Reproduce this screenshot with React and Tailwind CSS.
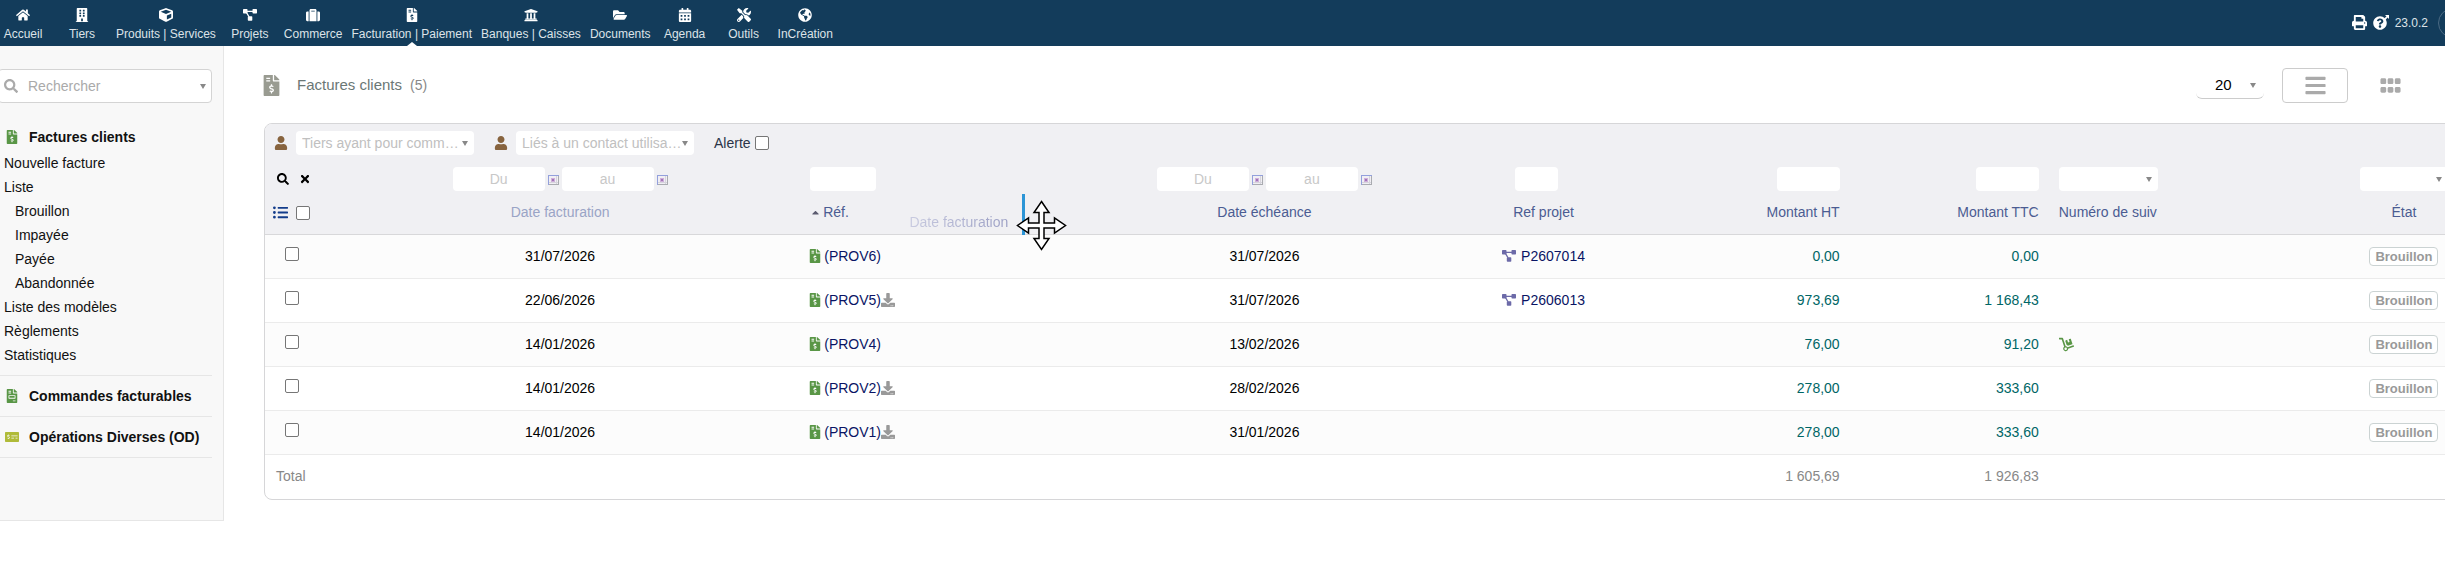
import React from 'react';
import {
  FaHome, FaBuilding, FaCube, FaSuitcase, FaFileInvoiceDollar, FaUniversity,
  FaFolderOpen, FaCalendarAlt, FaTools, FaGlobeAmericas, FaPrint, FaQuestionCircle, FaSearch,
  FaFileInvoice, FaMoneyCheckAlt, FaUser, FaTimes, FaListUl, FaBars, FaGripHorizontal,
  FaDownload, FaDolly, FaCaretUp,
} from 'react-icons/fa';

const ProjectIcon = ({ size = 14, className }) => (
  <svg width={size} height={size} viewBox="0 0 14 14" fill="currentColor" className={className}>
    <rect x="0" y="1" width="4.500" height="4.500" rx="0.700" />
    <rect x="9.500" y="1" width="4.500" height="4.500" rx="0.700" />
    <rect x="4.800" y="8.200" width="4.500" height="4.500" rx="0.700" />
    <path d="M4 2.700H10V3.900H4ZM3 5L4.200 4.400L6.600 8.400L5.400 9Z" />
  </svg>
);

const topMenu = [
  { label: 'Accueil', icon: FaHome },
  { label: 'Tiers', icon: FaBuilding },
  { label: 'Produits | Services', icon: FaCube },
  { label: 'Projets', icon: ProjectIcon },
  { label: 'Commerce', icon: FaSuitcase },
  { label: 'Facturation | Paiement', icon: FaFileInvoiceDollar, active: true },
  { label: 'Banques | Caisses', icon: FaUniversity },
  { label: 'Documents', icon: FaFolderOpen },
  { label: 'Agenda', icon: FaCalendarAlt },
  { label: 'Outils', icon: FaTools },
  { label: 'InCréation', icon: FaGlobeAmericas },
];

const sideLinks = [
  { label: 'Nouvelle facture' },
  { label: 'Liste' },
  { label: 'Brouillon', sub: true },
  { label: 'Impayée', sub: true },
  { label: 'Payée', sub: true },
  { label: 'Abandonnée', sub: true },
  { label: 'Liste des modèles' },
  { label: 'Règlements' },
  { label: 'Statistiques' },
];

const invoices = [
  { ref: '(PROV6)', date: '31/07/2026', due: '31/07/2026', project: 'P2607014', ht: '0,00', ttc: '0,00' },
  { ref: '(PROV5)', date: '22/06/2026', due: '31/07/2026', project: 'P2606013', ht: '973,69', ttc: '1 168,43', file: true },
  { ref: '(PROV4)', date: '14/01/2026', due: '13/02/2026', ht: '76,00', ttc: '91,20', shipment: true },
  { ref: '(PROV2)', date: '14/01/2026', due: '28/02/2026', ht: '278,00', ttc: '333,60', file: true },
  { ref: '(PROV1)', date: '14/01/2026', due: '31/01/2026', ht: '278,00', ttc: '333,60', file: true },
];

const Checkbox = ({ label }) => (
  <input
    type="checkbox"
    aria-label={label}
    className="block size-[14px] shrink-0 appearance-none rounded-xs border border-[#767676] bg-white checked:bg-[#133c5b]"
  />
);

const Arrow = () => (
  <svg width="6" height="5" viewBox="0 0 6 5" fill="#888">
    <path d="M0 0H6L3 5Z" />
  </svg>
);

const Select = ({ label, text = '', className }) => (
  <div className={`relative ${className}`}>
    <select
      aria-label={label}
      className="block h-6 w-full appearance-none truncate rounded-sm bg-white pl-[6px] pr-3 text-[14px] text-[#c0c0c0]"
    >
      <option>{text}</option>
    </select>
    <span className="pointer-events-none absolute inset-y-0 right-[6px] flex items-center">
      <Arrow />
    </span>
  </div>
);

const TextFilter = ({ label, className }) => (
  <input type="text" aria-label={label} className={`h-6 rounded-sm bg-white px-1 ${className}`} />
);

const CalendarIcon = () => (
  <svg width="11" height="10" viewBox="0 0 11 10" shapeRendering="crispEdges">
    <rect width="11" height="10" fill="#a9abb0" />
    <path d="M0 0h11v1H1v9H0z" fill="#93a0dc" />
    <rect x="1" y="1" width="9" height="8" fill="#f1eff4" />
    <path d="M8 1h1v8H8zM1 7h9v1H1z" fill="#d6d5dc" />
    <rect x="3" y="3" width="4" height="4" fill="#cfb0da" />
    <rect x="4" y="4" width="2" height="2" fill="#a274b8" />
  </svg>
);

const DateRange = ({ name }) => (
  <div className="flex items-center justify-center gap-[3px]">
    {['Du', 'au'].map((part) => (
      <React.Fragment key={part}>
        <input
          type="text"
          placeholder={part}
          aria-label={`${name} ${part}`}
          className="h-6 w-[92px] rounded-sm bg-white text-center text-[14px] placeholder:text-[#c8c8c8]"
        />
        <button type="button" aria-label={`${name} ${part} calendrier`} className="pt-[2px]">
          <CalendarIcon />
        </button>
      </React.Fragment>
    ))}
  </div>
);

const MoveCursor = () => (
  <svg width="51" height="51" viewBox="0 0 51 51">
    <path
      d="M25.500 1.500L33 12.500H28V23H38.500V18L49.500 25.500L38.500 33V28H28V38.500H33L25.500 49.500L18 38.500H23V28H12.500V33L1.500 25.500L12.500 18V23H23V12.500H18Z"
      fill="#fff"
      stroke="#000"
      strokeWidth="1.500"
    />
  </svg>
);

const TopBar = () => (
  <header className="flex h-[46px] justify-between bg-[#133c5b] text-[12px] text-[#dde3e8]">
    <nav className="-ml-[6px] flex gap-px">
      {topMenu.map(({ label, icon: Icon, active }) => (
        <a
          key={label}
          href="#"
          className="relative flex min-w-[58px] flex-col items-center px-1 pt-2 whitespace-nowrap"
        >
          <Icon size={14} className="text-white" />
          <span className="mt-1 leading-4">{label}</span>
          {active && (
            <span className="absolute bottom-0 border-x-[5px] border-b-4 border-x-transparent border-b-white" />
          )}
        </a>
      ))}
    </nav>
    <div className="-mr-[23px] flex items-center gap-[6px] pb-px">
      <button type="button" aria-label="Imprimer" className="text-white"><FaPrint size={15} /></button>
      <button type="button" aria-label="Aide" className="relative pr-[2px] text-white">
        <FaQuestionCircle size={14} />
        <svg className="absolute -top-px right-0" width="5" height="5" viewBox="0 0 5 5">
          <path d="M1 0H5V4L3.500 2.500L1.500 5L0 3.500L2.500 1.500Z" fill="#fff" />
        </svg>
      </button>
      <span>23.0.2</span>
      <span className="ml-1 size-[30px] rounded-full border border-[#4b6a83]" />
    </div>
  </header>
);

const SideSection = ({ icon: Icon, color, children }) => (
  <a href="#" className="flex items-center leading-5 font-bold text-[#111]">
    <span className={`w-6 ${color}`}><Icon size={14} /></span>
    {children}
  </a>
);

const Sidebar = () => (
  <aside className="w-[224px] shrink-0 border-r border-b border-[#e6e6e6] bg-[#f8f8f8] pr-[11px] pb-[62px] text-[14px] text-[#111]">
    <div className="relative mt-[23px] -ml-[2px]">
      <FaSearch size={14} className="pointer-events-none absolute top-[10px] left-[6px] text-[#aaa]" />
      <select
        aria-label="Rechercher"
        className="h-[34px] w-full appearance-none rounded-sm border border-[#d4d4d4] bg-white pl-[29px] text-[14px] text-[#aaa]"
      >
        <option>Rechercher</option>
      </select>
      <span className="pointer-events-none absolute inset-y-0 right-[6px] flex items-center">
        <Arrow />
      </span>
    </div>
    <div className="border-b border-[#e6e6e6] pt-6 pb-2 pl-[5px]">
      <SideSection icon={FaFileInvoiceDollar} color="text-[#599646]">Factures clients</SideSection>
      <ul className="mt-1">
        {sideLinks.map((item) => (
          <li key={item.label} className={item.sub ? 'pl-[10px]' : '-ml-px'}>
            <a href="#" className="block leading-6">{item.label}</a>
          </li>
        ))}
      </ul>
    </div>
    <div className="border-b border-[#e6e6e6] py-[10px] pl-[5px]">
      <SideSection icon={FaFileInvoice} color="text-[#599646]">Commandes facturables</SideSection>
    </div>
    <div className="border-b border-[#e6e6e6] py-[10px] pl-[5px]">
      <SideSection icon={FaMoneyCheckAlt} color="text-[#b0bb39]">Opérations Diverses (OD)</SideSection>
    </div>
  </aside>
);

const PageTitle = () => (
  <div className="flex items-center justify-between pt-[22px] pr-[33px]">
    <h1 className="flex items-center text-[15px] text-[#6b7775]">
      <FaFileInvoiceDollar size={21} className="mr-[15px] -ml-[3px] text-[#999b91]" />
      Factures clients
      <span className="ml-2 text-[14px] text-[#888]">(5)</span>
    </h1>
    <div className="flex items-center">
      <div className="relative mr-[18px]">
        <select
          aria-label="Lignes par page"
          className="h-[26px] w-[68px] appearance-none rounded-md border-b border-[#ccc] bg-white pl-[19px] text-[15px] text-black"
        >
          <option>20</option>
        </select>
        <span className="pointer-events-none absolute inset-y-0 right-2 flex items-center">
          <Arrow />
        </span>
      </div>
      <button type="button" aria-label="Liste" className="flex h-[35px] w-[66px] items-center justify-center rounded-sm border border-[#ccc] text-[#aaa]">
        <FaBars size={23} />
      </button>
      <button type="button" aria-label="Vignettes" className="flex h-[35px] w-[84px] items-center justify-center text-[#aaa]">
        <FaGripHorizontal size={23} />
      </button>
    </div>
  </div>
);

const InvoiceTable = () => (
  <div className="mt-5 overflow-hidden rounded-lg border border-[#d6d6d8] text-[14px]">
    <div className="flex h-[38px] items-center bg-[#f0f0f3] pl-[9px]">
      <FaUser size={14} className="mr-2 text-[#87633e]" />
      <Select label="Tiers ayant pour commercial" text="Tiers ayant pour commercial" className="w-[178px]" />
      <FaUser size={14} className="mr-2 ml-5 text-[#87633e]" />
      <Select label="Liés à un contact utilisateur" text="Liés à un contact utilisateur" className="w-[178px]" />
      <label className="ml-5 flex items-center gap-1 text-[#2b3448]">
        Alerte <Checkbox label="Alerte" />
      </label>
    </div>
    <table className="w-full table-fixed">
      <colgroup>
        <col className="w-[55px]" />
        <col className="w-[480px]" />
        <col className="w-[236px]" />
        <col className="w-[456px]" />
        <col className="w-[102px]" />
        <col className="w-[255px]" />
        <col className="w-[199px]" />
        <col className="w-[295px]" />
        <col className="w-[120px]" />
      </colgroup>
      <thead className="bg-[#f0f0f3] text-[#4b5c92]">
        <tr className="h-[34px]">
          <td>
            <div className="flex gap-[10px] pl-3 text-black">
              <button type="button" aria-label="Rechercher"><FaSearch size={12} /></button>
              <button type="button" aria-label="Effacer"><FaTimes size={12} /></button>
            </div>
          </td>
          <td><DateRange name="Date facturation" /></td>
          <td className="px-[10px]"><TextFilter label="Réf." className="block w-[66px]" /></td>
          <td><DateRange name="Date échéance" /></td>
          <td className="pl-[22px]"><TextFilter label="Ref projet" className="block w-[43px]" /></td>
          <td className="px-[10px]"><TextFilter label="Montant HT" className="ml-auto block w-[63px]" /></td>
          <td className="px-[10px]"><TextFilter label="Montant TTC" className="ml-auto block w-[63px]" /></td>
          <td className="px-[10px]"><Select label="Numéro de suivi" className="w-[99px]" /></td>
          <td><Select label="État" className="mx-auto w-[88px]" /></td>
        </tr>
        <tr className="h-[38px] border-b border-[#d8d8da]">
          <th className="pb-1 font-normal">
            <div className="flex items-center gap-2 pl-2 text-[#133c8b]">
              <FaListUl size={15} />
              <Checkbox label="Tout sélectionner" />
            </div>
          </th>
          <th className="pb-1 font-normal text-[#9aa4c6]">Date facturation</th>
          <th className="relative px-[10px] pb-1 text-left font-normal">
            <span className="flex items-center gap-[2px]"><FaCaretUp size={11} className="text-[#5c5c70]" />Réf.</span>
            {/* dragged column header and its drop marker */}
            <span className="absolute top-[18px] right-[28px] bg-linear-to-r from-[#c9cbe0] to-[#9a9ec4] bg-clip-text leading-4 whitespace-nowrap text-transparent">
              Date facturation
            </span>
            <span className="absolute -top-[2px] -bottom-px right-[11px] w-[3px] bg-[#2c95d6]" />
            <span className="absolute top-1 -right-[31px] z-10"><MoveCursor /></span>
          </th>
          <th className="pb-1 font-normal">Date échéance</th>
          <th className="pb-1 font-normal">Ref projet</th>
          <th className="px-[10px] pb-1 text-right font-normal">Montant HT</th>
          <th className="px-[10px] pb-1 text-right font-normal">Montant TTC</th>
          <th className="px-[10px] pb-1 text-left font-normal">Numéro de suiv</th>
          <th className="pb-1 font-normal">État</th>
        </tr>
      </thead>
      <tbody>
        {invoices.map((invoice) => (
          <tr key={invoice.ref} className="h-[44px] border-b border-[#ebebeb] odd:bg-[#fcfcfc]">
            <td className="pb-1 pl-5"><Checkbox label={`Sélectionner ${invoice.ref}`} /></td>
            <td className="text-center text-black">{invoice.date}</td>
            <td className="px-[10px]">
              <div className="flex items-center text-[#0a1464]">
                <FaFileInvoiceDollar size={14} className="-ml-[2px] mr-[2px] text-[#599646]" />
                <a href="#">{invoice.ref}</a>
                {invoice.file && <FaDownload size={14} className="text-[#999]" />}
              </div>
            </td>
            <td className="text-center text-black">{invoice.due}</td>
            <td>
              {invoice.project && (
                <div className="flex items-center justify-center gap-[5px] text-[#0a1464]">
                  <ProjectIcon className="text-[#6c6aa8]" />
                  <a href="#">{invoice.project}</a>
                </div>
              )}
            </td>
            <td className="px-[10px] text-right text-[#006666]">{invoice.ht}</td>
            <td className="px-[10px] text-right text-[#006666]">{invoice.ttc}</td>
            <td className="px-[10px]">{invoice.shipment && <FaDolly size={15} className="text-[#599646]" />}</td>
            <td className="text-center">
              <span className="inline-block rounded-sm border border-[#cbd3d3] bg-white px-[5px] text-[13px] leading-[17px] font-bold text-[#999]">
                Brouillon
              </span>
            </td>
          </tr>
        ))}
      </tbody>
      <tfoot>
        <tr className="h-[45px] text-[#888]">
          <td className="pl-[11px]">Total</td>
          <td colSpan={4} />
          <td className="px-[10px] text-right">1 605,69</td>
          <td className="px-[10px] text-right">1 926,83</td>
          <td colSpan={2} />
        </tr>
      </tfoot>
    </table>
  </div>
);

const App = () => {
  return (
    <div className="overflow-x-clip bg-white font-['Liberation_Sans',Arial,sans-serif]">
      <TopBar />
      <div className="flex items-start">
        <Sidebar />
        <main className="-mr-5 ml-10 min-w-0 flex-1">
          <PageTitle />
          <InvoiceTable />
        </main>
      </div>
    </div>
  );
};

export default App;
